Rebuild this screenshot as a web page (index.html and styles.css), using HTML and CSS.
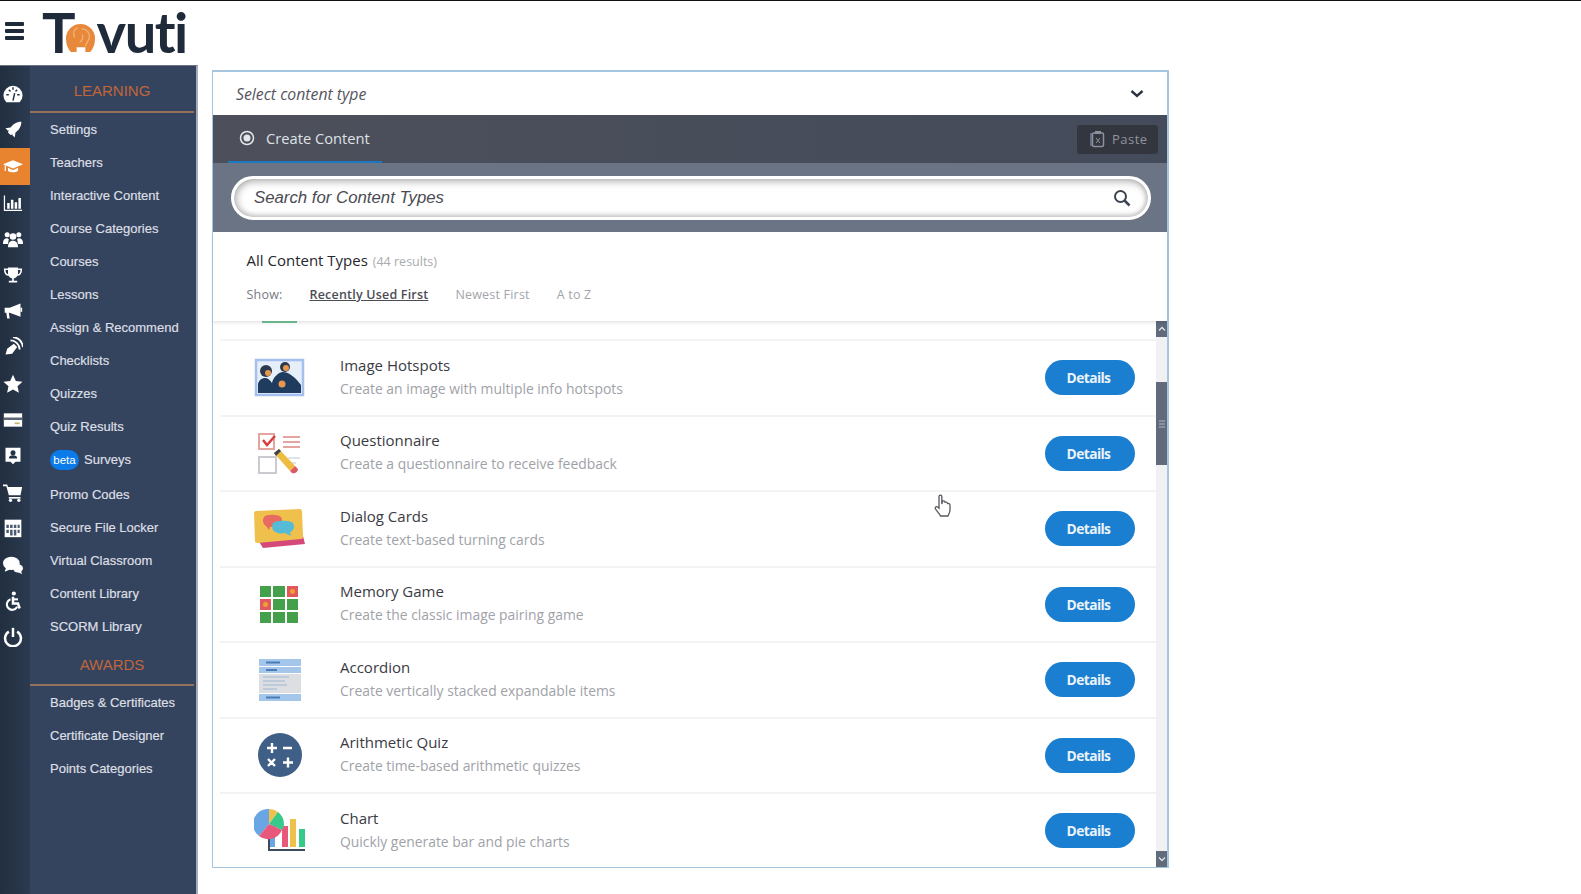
FILE: index.html
```html
<!DOCTYPE html>
<html lang="en">

<head>
  <meta charset="UTF-8">
  <meta name="viewport" content="width=device-width, initial-scale=1.0">
  <title>Tovuti - Create Content</title>
  <link rel="stylesheet" href="styles.css">
</head>

<body>
  <header class="topbar">
    <div class="burger"><span></span><span></span><span></span></div>
    <div class="logo">
      <span class="logo-t">T</span>
      <svg class="logo-o" viewBox="0 0 32 32">
        <path d="M16 1a15 15 0 0 1 15 15c0 6-2 11-5 14h-5v-5h-9v5H6C3 27 1 22 1 16A15 15 0 0 1 16 1z" fill="#e8883a"/>
        <path d="M13 5c-4 1-5 6-3 10M17 6c5 0 9 4 8 10-1 3-3 4-4 8M18 12c1 3 0 6-3 8" fill="none" stroke="#f3b47c" stroke-width="1.2"/>
      </svg>
      <span class="logo-rest">vuti</span>
    </div>
  </header>

  <div class="page">
    <aside class="sidebar">
      <nav class="rail">
        <a class="rail-item"><svg viewBox="0 0 24 24"><path d="M4 22a11.500 11.500 0 1 1 16 0z" fill="#fff"/><path d="M12 20l2-9M4 13h3M17 13h3M7 7l2 2M12 4v3M17 7l-2 2" stroke="#243246" stroke-width="1.800"/></svg></a>
        <a class="rail-item"><svg viewBox="0 0 24 24"><path d="M22 2c-6 0-10 3-13 7l-6 1 3 3 1-1-1 3 3 3 3-1-1 1 3 3 1-6c4-3 7-7 7-13z" fill="#fff"/></svg></a>
        <a class="rail-item active"><svg viewBox="0 0 24 24"><path d="M12 5l12 5-12 5L0 10z" fill="#fff"/><path d="M6 14v4c3 2 9 2 12 0v-4l-6 3zM2 11v7h1.500v-7z" fill="#fff"/></svg></a>
        <a class="rail-item"><svg viewBox="0 0 24 24"><path d="M1 3h1.500v17H23v1.500H1zM5 12h3v7H5zM9.500 8h3v11h-3zM14 11h3v8h-3zM18.500 6h3v13h-3z" fill="#fff"/></svg></a>
        <a class="rail-item"><svg viewBox="0 0 24 24"><circle cx="5" cy="7" r="3" fill="#fff"/><circle cx="19" cy="7" r="3" fill="#fff"/><circle cx="12" cy="9" r="4" fill="#fff"/><path d="M0 17c0-4 2-6 5-6l2 1-1 6H0zM24 17c0-4-2-6-5-6l-2 1 1 6h6zM6 22c0-5 2-8 6-8s6 3 6 8z" fill="#fff"/></svg></a>
        <a class="rail-item"><svg viewBox="0 0 24 24"><path d="M6 3h12v7c0 4-3 6-5 6v3h4v2H7v-2h4v-3c-2 0-5-2-5-6z" fill="#fff"/><path d="M6 5H2c0 5 2 7 5 7M18 5h4c0 5-2 7-5 7" fill="none" stroke="#fff" stroke-width="1.800"/></svg></a>
        <a class="rail-item"><svg viewBox="0 0 24 24"><path d="M2 8h6l13-5v16L8 14H7l1 7H5l-1-7H2z" fill="#fff"/><path d="M21 8h2v5h-2z" fill="#fff"/></svg></a>
        <a class="rail-item"><svg viewBox="0 0 24 24"><path d="M3 21l2-7 8-6 4 4-6 8z" fill="#fff"/><path d="M9 4c6 0 11 5 11 11M12 0c7 1 11 6 12 12" fill="none" stroke="#fff" stroke-width="2.200"/></svg></a>
        <a class="rail-item"><svg viewBox="0 0 24 24"><path d="M12 1l3.400 7.400 8 .9-6 5.400 1.700 7.900-7.100-4-7.100 4 1.700-7.900-6-5.400 8-.9z" fill="#fff"/></svg></a>
        <a class="rail-item"><svg viewBox="0 0 24 24"><path d="M1 4h22v16H1z" fill="#fff"/><path d="M1 9h22v3H1z" fill="#5c6675"/><path d="M14 15h6v2h-6z" fill="#c9b36a"/></svg></a>
        <a class="rail-item"><svg viewBox="0 0 24 24"><path d="M3 2h18v17h-6l-3 3-3-3H3z" fill="#fff"/><circle cx="12" cy="8" r="3" fill="#243246"/><path d="M7 15c0-3 2-4 5-4s5 1 5 4z" fill="#243246"/></svg></a>
        <a class="rail-item"><svg viewBox="0 0 24 24"><path d="M0 3h5l1 3h17l-2 10H7L4 5H0z" fill="#fff"/><path d="M7 18h14v2H7z" fill="#fff"/><circle cx="9" cy="22" r="2" fill="#fff"/><circle cx="19" cy="22" r="2" fill="#fff"/></svg></a>
        <a class="rail-item"><svg viewBox="0 0 24 24"><path d="M2 2h20v21H2z" fill="#fff"/><path d="M4 8h3v4H4zM8.500 8h3v4h-3zM13 8h3v4h-3zM17.500 8H20v4h-2.500zM4 14h3v4H4zM8.500 14h3v7h-3zM13 14h3v7h-3zM17.500 14H20v4h-2.500z" fill="#4a5a70"/></svg></a>
        <a class="rail-item"><svg viewBox="0 0 24 24"><ellipse cx="10" cy="10" rx="10" ry="8" fill="#fff"/><path d="M2 20l2-6 5 3z" fill="#fff"/><ellipse cx="18" cy="16" rx="6" ry="5" fill="#fff"/><path d="M23 23l-2-5-4 2z" fill="#fff"/></svg></a>
        <a class="rail-item"><svg viewBox="0 0 24 24"><circle cx="13" cy="3" r="2.500" fill="#fff"/><path d="M12 7v8h6l2 6" fill="none" stroke="#fff" stroke-width="3"/><path d="M9 10a6.500 6.500 0 1 0 8 9" fill="none" stroke="#fff" stroke-width="2.500"/><path d="M12 10h6" stroke="#fff" stroke-width="2.500"/></svg></a>
        <a class="rail-item"><svg viewBox="0 0 24 24"><path d="M7 5.500a9.500 9.500 0 1 0 10 0" fill="none" stroke="#fff" stroke-width="3"/><path d="M12 1v11" stroke="#fff" stroke-width="3"/></svg></a>
      </nav>

      <nav class="menu">
        <h3 class="menu-title">LEARNING</h3>
        <a class="menu-item">Settings</a>
        <a class="menu-item">Teachers</a>
        <a class="menu-item">Interactive Content</a>
        <a class="menu-item">Course Categories</a>
        <a class="menu-item">Courses</a>
        <a class="menu-item">Lessons</a>
        <a class="menu-item">Assign &amp; Recommend</a>
        <a class="menu-item">Checklists</a>
        <a class="menu-item">Quizzes</a>
        <a class="menu-item">Quiz Results</a>
        <a class="menu-item surveys"><span class="beta">beta</span>Surveys</a>
        <a class="menu-item">Promo Codes</a>
        <a class="menu-item">Secure File Locker</a>
        <a class="menu-item">Virtual Classroom</a>
        <a class="menu-item">Content Library</a>
        <a class="menu-item">SCORM Library</a>
        <h3 class="menu-title awards">AWARDS</h3>
        <a class="menu-item">Badges &amp; Certificates</a>
        <a class="menu-item">Certificate Designer</a>
        <a class="menu-item">Points Categories</a>
      </nav>
    </aside>

    <main class="content">
      <section class="panel">
        <div class="select-row">
          <span>Select content type</span>
          <svg class="chevron" viewBox="0 0 14 10"><path d="M1.500 2l5.500 5 5.500-5" fill="none" stroke="#2c3444" stroke-width="2.400"/></svg>
        </div>

        <div class="tab-bar">
          <div class="tab">
            <svg class="radio" viewBox="0 0 16 16"><circle cx="8" cy="8" r="6.500" fill="none" stroke="#e4e6ea" stroke-width="1.500"/><circle cx="8" cy="8" r="3.500" fill="#e4e6ea"/></svg>
            Create Content
          </div>
          <div class="paste">
            <svg viewBox="0 0 16 18"><path d="M1 3h3v13H1z" fill="#5f6b86"/><rect x="3.500" y="3" width="11" height="13.500" rx="1.500" fill="none" stroke="#8d919a" stroke-width="1.500"/><path d="M6 1h6v3H6z" fill="#8d919a"/><path d="M7 8l4 5M11 8l-4 5" stroke="#8d919a"/></svg>
            Paste
          </div>
        </div>

        <div class="search-band">
          <div class="search-box">
            <span>Search for Content Types</span>
            <svg viewBox="0 0 18 18"><circle cx="7.500" cy="7.500" r="5.500" fill="none" stroke="#3d4450" stroke-width="2"/><path d="M11.500 11.500l5 5" stroke="#3d4450" stroke-width="2.500"/></svg>
          </div>
        </div>

        <div class="list-head">
          <div class="list-title"><b>All Content Types</b> <small>(44 results)</small></div>
          <div class="sort">
            <span class="sort-label">Show:</span>
            <a class="current">Recently Used First</a>
            <a>Newest First</a>
            <a>A to Z</a>
          </div>
        </div>

        <div class="list-wrap">
          <div class="list">
            <div class="peek"><span></span></div>

            <div class="row">
              <svg class="row-icon" viewBox="-1 -3 52 44">
                <rect x="1" y="1" width="47" height="35" fill="#e6eefa" stroke="#a5bfee" stroke-width="2.500"/>
                <path d="M3 34v-9c1-4 4-6 7-6 3 0 5 2 7 5 1-5 6-11 11-11 6 0 13 6 18 13v8z" fill="#1f3b5e"/>
                <circle cx="11" cy="12" r="6" fill="#2b3a4e"/>
                <circle cx="30" cy="8" r="5" fill="#2b3a4e"/>
                <circle cx="13" cy="14" r="3" fill="#e9964e"/>
                <circle cx="31" cy="9" r="3" fill="#e9964e"/>
                <circle cx="27" cy="25" r="3.500" fill="#e9964e"/>
              </svg>
              <div class="row-text"><h4>Image Hotspots</h4><p>Create an image with multiple info hotspots</p></div>
              <a class="details">Details</a>
            </div>

            <div class="row">
              <svg class="row-icon" viewBox="0 0 50 44">
                <rect x="4" y="3" width="15" height="15" fill="none" stroke="#e6a49e" stroke-width="2"/>
                <path d="M8 9l4 5 8-9" fill="none" stroke="#d93b40" stroke-width="2.500"/>
                <path d="M28 6h17M28 11h17M28 16h17" stroke="#e6a49e" stroke-width="1.800"/>
                <rect x="4" y="26" width="17" height="16" fill="none" stroke="#c9cbd0" stroke-width="2"/>
                <path d="M33 27h12M33 32h8" stroke="#d5dbe6" stroke-width="1.500"/>
                <path d="M19 22l5-4 16 17-5 5z" fill="#eebc3f"/>
                <path d="M19 22l5-4 2 2-5 5z" fill="#3d4450"/>
                <path d="M35 40l5-5 3 3c0 3-3 5-6 4z" fill="#dd5a64"/>
              </svg>
              <div class="row-text"><h4>Questionnaire</h4><p>Create a questionnaire to receive feedback</p></div>
              <a class="details">Details</a>
            </div>

            <div class="row">
              <svg class="row-icon" viewBox="0 0 52 44">
                <path d="M4 33l44-8 3 12-42 4z" fill="#d5487a"/>
                <path d="M2 4l44-2c1 0 2 1 2 2l1 26c0 1-1 2-2 2L3 36c-1 0-2-1-2-2L0 6c0-1 1-2 2-2z" fill="#efc14c"/>
                <path d="M10 10c2-3 14-3 17 0 2 3 1 8-3 9l-8 1-1 3-3-4c-3-2-4-6-2-9z" fill="#e86a60"/>
                <path d="M19 16c3-3 17-3 20 0 2 3 1 8-3 9l1 4-6-3c-5 1-10 0-12-3-1-2-1-5 0-7z" fill="#55bbd6"/>
              </svg>
              <div class="row-text"><h4>Dialog Cards</h4><p>Create text-based turning cards</p></div>
              <a class="details">Details</a>
            </div>

            <div class="row">
              <div class="row-icon memory">
                <i></i><i></i><i class="flip"></i>
                <i class="flip"></i><i></i><i></i>
                <i></i><i></i><i></i>
              </div>
              <div class="row-text"><h4>Memory Game</h4><p>Create the classic image pairing game</p></div>
              <a class="details">Details</a>
            </div>

            <div class="row">
              <svg class="row-icon" viewBox="-1 -1 52 44">
                <rect x="4" y="0" width="42" height="7" fill="#a3c6ea"/>
                <rect x="4" y="8" width="42" height="6" fill="#a3c6ea"/>
                <rect x="4" y="15" width="42" height="19" fill="#dcdee2"/>
                <rect x="4" y="35" width="42" height="7" fill="#a3c6ea"/>
                <path d="M11 3.500h14M11 11h11M11 38.500h14" stroke="#4a7cb5" stroke-width="1.800"/>
                <path d="M8 18h26M8 22h22M8 26h24M8 30h14" stroke="#b3c3d8" stroke-width="1.400"/>
              </svg>
              <div class="row-text"><h4>Accordion</h4><p>Create vertically stacked expandable items</p></div>
              <a class="details">Details</a>
            </div>

            <div class="row">
              <svg class="row-icon" viewBox="0 0 50 44">
                <circle cx="25" cy="22" r="22" fill="#3f5f86"/>
                <path d="M12 15h10M17 10v10M28 15h9M13 26l7 7M20 26l-7 7M28 29.500h10M33 24.500v10" stroke="#fff" stroke-width="2.400"/>
              </svg>
              <div class="row-text"><h4>Arithmetic Quiz</h4><p>Create time-based arithmetic quizzes</p></div>
              <a class="details">Details</a>
            </div>

            <div class="row">
              <svg class="row-icon" viewBox="0 0 52 44">
                <path d="M16 17h5v21h-5zM29 17h5v21h-5z" fill="#6aa5e4"/>
                <rect x="28" y="17" width="6" height="21" fill="#e8587a"/>
                <rect x="36" y="10" width="6" height="28" fill="#efc14c"/>
                <rect x="45" y="20" width="6" height="18" fill="#37c98a"/>
                <path d="M15 24v17h36" fill="none" stroke="#3f4a5c" stroke-width="2"/>
                <path d="M15 15V0A15 15 0 0 0 5 27z" fill="#6aa5e4"/>
                <path d="M15 15V0a15 15 0 0 1 9 3z" fill="#efc14c"/>
                <path d="M15 15l9-12a15 15 0 0 1 6 12c0 2-1 5-2 6z" fill="#37c98a"/>
                <path d="M15 15l13 6a15 15 0 0 1-23 6z" fill="#e8587a"/>
              </svg>
              <div class="row-text"><h4>Chart</h4><p>Quickly generate bar and pie charts</p></div>
              <a class="details">Details</a>
            </div>
          </div>

          <div class="scrollbar">
            <div class="scroll-btn"><svg viewBox="0 0 8 6"><path d="M1 4.500l3-3 3 3" fill="none" stroke="#e3e5ea" stroke-width="1.300"/></svg></div>
            <div class="scroll-gap"></div>
            <div class="scroll-thumb"><span></span><span></span><span></span></div>
            <div class="scroll-rest"></div>
            <div class="scroll-btn"><svg viewBox="0 0 8 6"><path d="M1 1.500l3 3 3-3" fill="none" stroke="#e3e5ea" stroke-width="1.300"/></svg></div>
          </div>
        </div>
      </section>
    </main>
  </div>

  <svg class="hand-cursor" viewBox="0 0 18 24"><path d="M5 2.500c0-1.800 2.800-1.800 2.800 0V10l.7-3c1.600-.4 2.400.2 2.500 1.200 1.500-.5 2.400.2 2.500 1.300 1.500-.4 2.500.4 2.500 1.700v4.500c0 3-1.300 4.300-2 6.300H6.500c-1-2.500-3-4-5-7-.8-1.500.7-3 2.200-2l1.300 1.200z" fill="#fff" stroke="#55585e" stroke-width="1.300"/></svg>
</body>

</html>
```

FILE: styles.css
```css
* {
  box-sizing: border-box;
}

html,
body {
  height: 100%;
}

body {
  margin: 0;
  background-color: #fff;
  font-family: "Open Sans", "Liberation Sans", sans-serif;
  color: #3e3f47;
  display: flex;
  flex-direction: column;
  overflow: hidden;
  position: relative;
}

/* top bar */
.topbar {
  height: 65px;
  flex: none;
  border-top: 1px solid #111;
  display: flex;
  align-items: flex-start;
}

.burger {
  width: 19px;
  margin: 21px 0 0 5px;
  display: flex;
  flex-direction: column;
  gap: 3px;
}

.burger span {
  height: 4px;
  border-radius: 1px;
  background-color: #1f2a3a;
}

.logo {
  display: flex;
  align-items: flex-end;
  margin: 0 0 0 18px;
  height: 62px;
  color: #1f2a3a;
  font-family: Lato, "Open Sans", sans-serif;
  font-size: 56px;
  font-weight: 700;
  line-height: 62px;
}

.logo-t {
  letter-spacing: -2px;
}

.logo-o {
  width: 31px;
  height: 31px;
  margin: 0 0 9px -9px;
}

.logo-rest {
  letter-spacing: -1.5px;
  margin-left: 1px;
}

/* sidebar */
.page {
  flex: 1;
  display: flex;
  min-height: 0;
}

.sidebar {
  width: 198px;
  flex: none;
  display: flex;
  border-right: 2px solid #a8adb5;
  border-top: 1px solid #6d7480;
}

.rail {
  width: 30px;
  flex: none;
  padding-top: 10px;
  background: linear-gradient(90deg, #222f40, #2a3a50);
  display: flex;
  flex-direction: column;
}

.rail-item {
  height: 36.2px;
  padding-right: 4px;
  display: flex;
  align-items: center;
  justify-content: center;
}

.rail-item svg {
  width: 20px;
  height: 20px;
}

.rail-item.active {
  background-color: #e8832f;
}

.menu {
  flex: 1;
  background-color: #34445e;
  font-family: "Liberation Sans", Arial, sans-serif;
  font-size: 13px;
  padding-top: 9px;
}

.menu-title {
  margin: 0 2px 0 0;
  height: 38px;
  line-height: 32px;
  text-align: center;
  font-size: 15px;
  font-weight: 400;
  color: #c0663a;
  border-bottom: 2px solid #93705a;
}

.menu-title.awards {
  margin-top: 6px;
  height: 37px;
}

.menu-item {
  display: flex;
  align-items: center;
  height: 33px;
  padding-left: 20px;
  color: #dcdfe4;
  -webkit-text-stroke: 0.2px #dcdfe4;
}

.menu-item.surveys {
  height: 35px;
  padding-bottom: 2px;
}

.beta {
  width: 29px;
  height: 20px;
  margin-right: 5px;
  border-radius: 10px;
  background-color: #0b7bea;
  color: #fff;
  font-size: 11.5px;
  line-height: 20px;
  text-align: center;
  -webkit-text-stroke: 0;
}

/* panel */
.content {
  flex: 1;
  padding: 5px 0 0 14px;
}

.panel {
  width: 957px;
  height: 798px;
  border: 2px solid #a6c6e0;
  border-left-width: 1.5px;
  border-bottom-width: 1.5px;
  display: flex;
  flex-direction: column;
}

.select-row {
  height: 43px;
  flex: none;
  padding: 0 23px;
  display: flex;
  align-items: center;
  justify-content: space-between;
  font-size: 15.8px;
  font-style: italic;
  color: #55565d;
}

.chevron {
  width: 14px;
  height: 10px;
}

.tab-bar {
  height: 48px;
  flex: none;
  padding-right: 9px;
  background: linear-gradient(90deg, #4d505b, #444b5a);
  display: flex;
  align-items: center;
  justify-content: space-between;
}

.tab {
  width: 154px;
  height: 48px;
  margin-left: 15px;
  padding-left: 11px;
  display: flex;
  align-items: center;
  gap: 11px;
  font-size: 14.7px;
  color: #dfe1e5;
  border-bottom: 2px solid #1a78c2;
}

.radio {
  width: 16px;
  height: 16px;
}

.paste {
  width: 81px;
  height: 29px;
  padding-left: 12px;
  border-radius: 3px;
  background-color: #33363f;
  display: flex;
  align-items: center;
  gap: 7px;
  font-size: 13px;
  letter-spacing: 0.5px;
  color: #90949d;
}

.paste svg {
  width: 16px;
  height: 18px;
}

.search-band {
  height: 69px;
  flex: none;
  padding: 13px 16px 0 18px;
  background-color: #6b7484;
}

.search-box {
  height: 44px;
  padding: 0 17px 0 20px;
  border: 3px solid #fff;
  border-radius: 22px;
  background-color: #fff;
  box-shadow: inset 0 7px 8px -5px #a9a9a9, inset 7px 0 8px -5px #b5b5b5, inset 0 -5px 5px -3px #c4c4c4, inset -5px 0 5px -3px #c4c4c4;
  display: flex;
  align-items: center;
  justify-content: space-between;
  font-family: "Liberation Sans", Arial, sans-serif;
  font-size: 16.8px;
  font-style: italic;
  color: #4a4b52;
}

.search-box svg {
  width: 18px;
  height: 18px;
}

.list-head {
  height: 89px;
  flex: none;
  padding: 16px 0 0 33.5px;
  position: relative;
  z-index: 1;
  background-color: #fff;
  box-shadow: 0 2px 3px rgba(0, 0, 0, 0.1);
}

.list-title {
  height: 24px;
  font-size: 15px;
  line-height: 24px;
  color: #26272d;
}

.list-title b {
  font-weight: 500;
}

.list-title small {
  margin-left: 1px;
  font-size: 12.5px;
  color: #a9abb0;
}

.sort {
  margin-top: 13px;
  display: flex;
  gap: 27px;
  font-size: 12.5px;
  letter-spacing: 0.2px;
  line-height: 20px;
  color: #a3a5aa;
}

.sort-label {
  color: #77797f;
}

.sort .current {
  color: #4c4d54;
  font-weight: 600;
  text-decoration: underline;
}

.list-wrap {
  flex: 1;
  min-height: 0;
  display: flex;
}

.list {
  flex: 1;
  overflow: hidden;
}

.peek {
  height: 20px;
  margin-left: 7px;
  border-bottom: 2px solid #f4f4f5;
}

.peek span {
  display: block;
  width: 35px;
  height: 2px;
  margin-left: 42px;
  background-color: #75c49a;
}

.row {
  height: 75.5px;
  margin-left: 7px;
  padding: 0 21px 0 34px;
  border-bottom: 2px solid #f3f3f4;
  display: flex;
  align-items: center;
}

.row-icon {
  width: 52px;
  height: 44px;
  flex: none;
}

.memory {
  width: 38px;
  height: 37px;
  margin: 0 8px 0 6px;
  display: grid;
  grid-template-columns: repeat(3, 1fr);
  gap: 2px;
}

.memory i {
  background-color: #44a04a;
}

.memory i.flip {
  background: radial-gradient(circle, #f0a030 0 2px, #e0595e 3px);
}

.row-text {
  flex: 1;
  margin-left: 34px;
  padding-bottom: 3px;
}

.row-text h4 {
  margin: 0;
  font-size: 15px;
  font-weight: 500;
  line-height: 24px;
  color: #3a3b43;
}

.row-text p {
  margin: 0;
  font-size: 13.9px;
  line-height: 23px;
  color: #a0a2a8;
}

.details {
  width: 90px;
  height: 35px;
  border-radius: 18px;
  background-color: #1a7fd0;
  color: #eaf3fb;
  font-size: 13.8px;
  font-weight: 700;
  letter-spacing: -0.6px;
  line-height: 35px;
  text-align: center;
  padding-right: 3px;
}

.scrollbar {
  width: 11px;
  flex: none;
  background-color: #f1f1f4;
  display: flex;
  flex-direction: column;
}

.scroll-btn {
  height: 16px;
  flex: none;
  background-color: #626b7c;
  display: flex;
  align-items: center;
  justify-content: center;
}

.scroll-btn svg {
  width: 8px;
  height: 6px;
}

.scroll-gap {
  height: 45px;
  flex: none;
}

.scroll-thumb {
  height: 83px;
  flex: none;
  background-color: #626b7c;
  display: flex;
  flex-direction: column;
  justify-content: center;
  align-items: center;
  gap: 1px;
}

.scroll-thumb span {
  width: 6px;
  height: 2px;
  background-color: #8a92a1;
}

.scroll-rest {
  flex: 1;
}

/* mouse pointer caught in the screenshot */
.hand-cursor {
  position: absolute;
  left: 934px;
  top: 494px;
  width: 18px;
  height: 24px;
}
```
